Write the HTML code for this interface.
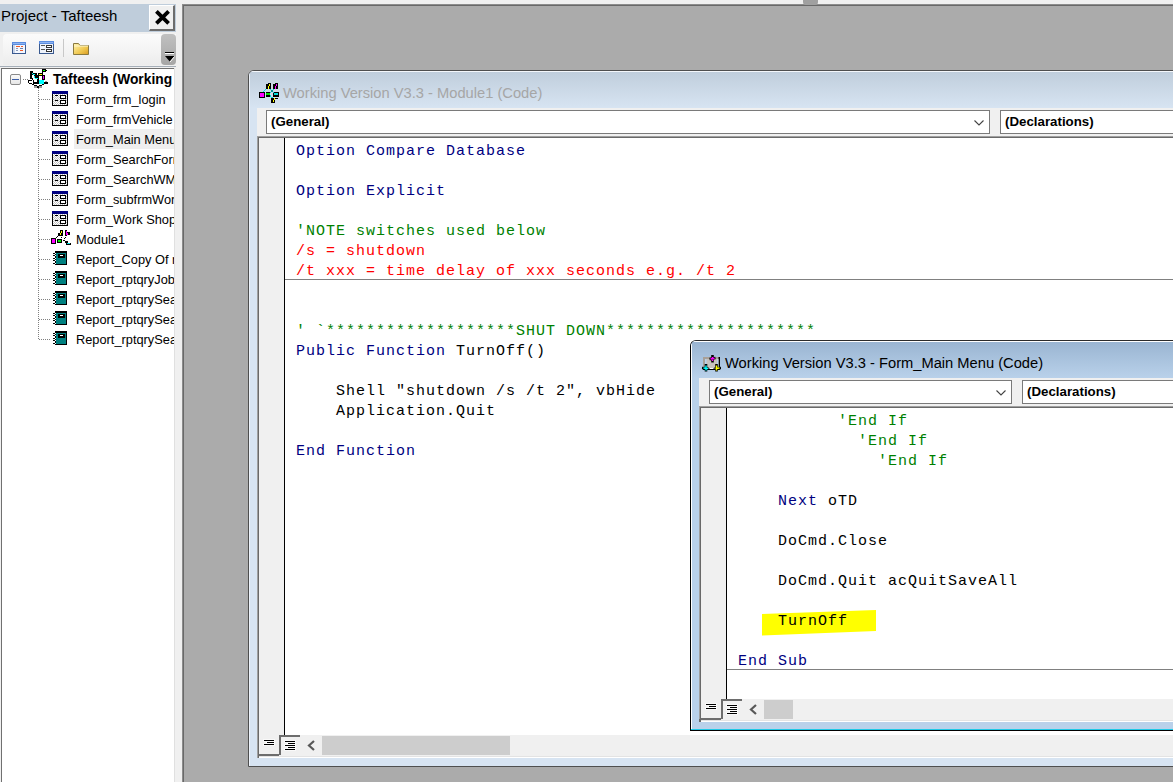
<!DOCTYPE html>
<html><head><meta charset="utf-8">
<style>
*{margin:0;padding:0;box-sizing:border-box}
html,body{width:1173px;height:782px;overflow:hidden;background:#f0f0f0;position:relative;font-family:"Liberation Sans",sans-serif}
div,span,svg,pre{position:absolute}
svg{overflow:visible}
.t{white-space:nowrap}
#ptitle{left:0;top:4px;width:176px;height:28px;background:#bfcddb}
#pclose{left:149px;top:5px;width:26px;height:26px;background:#f0f0f0;border-top:1px solid #fff;border-left:1px solid #fff;border-right:2px solid #6d6d6d;border-bottom:2px solid #6d6d6d}
#ptool{left:3px;top:34px;width:173px;height:31px;border-radius:4px 0 0 0;background:linear-gradient(#fbfbfb,#f3f3f3 60%,#ececec)}
#pchev{left:161px;top:34px;width:15px;height:31px;border-radius:4px;background:linear-gradient(#c0c0c0,#a6a6a6)}
#pline{left:0;top:66px;width:176px;height:1px;background:#a5aeb8}
#tree{left:1px;top:68px;width:173px;height:714px;background:#fff;border-left:1px solid #707070;border-top:1px solid #707070;overflow:hidden}
.ti{font-size:12.8px;white-space:nowrap;color:#000;left:74px}
.hd{height:1px;background:repeating-linear-gradient(90deg,#808080 0 1px,transparent 1px 2px)}
.vd{width:1px;background:repeating-linear-gradient(180deg,#808080 0 1px,transparent 1px 2px)}
#mdi{left:182px;top:4px;width:991px;height:778px;background:#ababab;border-left:2px solid #696969;border-top:2px solid #696969}
.code span{position:static}
.code{font-family:"Liberation Mono",monospace;font-size:15px;letter-spacing:1px;line-height:20px;white-space:pre;color:#000}
.kw{color:#00007f}
.cm{color:#007f00}
.er{color:#ff0000}
.combo{background:#fff;border:1px solid #7a7a7a;font-weight:bold;font-size:13.3px;white-space:nowrap}
.combo span{left:4px;top:3px}
.pane{background:#fff;border-top:2px solid #696969;border-left:2px solid #696969;overflow:hidden}
.margin{left:0;top:0;width:26px;background:#f0f0f0;border-right:1px solid #000}
.sep{height:1px;background:#808080}
.ln{height:1px;background:#000;box-shadow:0 0 0 1px rgba(255,255,255,.6)}
</style></head><body>
<!-- project panel -->
<div id="ptitle"><span class="t" style="left:1px;top:3px;font-size:15px">Project - Tafteesh</span></div>
<div id="pclose"><svg style="left:5px;top:4px" width="16" height="16"><path d="M1.4,1.3 L13.6,13.4 M13.6,1.3 L1.4,13.4" stroke="#000" stroke-width="3.8"/></svg></div>
<div id="ptool">
  <svg style="left:9px;top:8px" width="16" height="14"><g shape-rendering="crispEdges"><rect x="0" y="0" width="14" height="12" fill="#3a5a90"/><rect x="0" y="0" width="14" height="3" fill="#5b8de0"/><rect x="1" y="1" width="12" height="1" fill="#8fb4f0"/><rect x="1" y="3" width="2" height="8" fill="#c8d4e8"/><rect x="3" y="3" width="10" height="8" fill="#f4f8ff"/><rect x="4" y="4" width="4" height="1" fill="#f05a28"/><rect x="9" y="4" width="2" height="1" fill="#f05a28"/><rect x="4" y="6" width="2" height="1" fill="#8a9ab8"/><rect x="8" y="6" width="3" height="1" fill="#6a7fa8"/><rect x="4" y="8" width="2" height="1" fill="#8a9ab8"/><rect x="8" y="8" width="3" height="1" fill="#f05a28"/></g>
</svg>
  <svg style="left:36px;top:7px" width="16" height="14"><g shape-rendering="crispEdges"><rect x="0" y="0" width="15" height="13" fill="#3a5a90"/><rect x="0" y="0" width="15" height="3" fill="#5b8de0"/><rect x="1" y="1" width="13" height="1" fill="#8fb4f0"/><rect x="1" y="3" width="13" height="9" fill="#eef3fb"/><rect x="2" y="4" width="4" height="1" fill="#555"/><rect x="2" y="8" width="4" height="1" fill="#555"/><rect x="7" y="4" width="6" height="3" fill="#333"/><rect x="8" y="5" width="4" height="1" fill="#fff"/><rect x="7" y="8" width="6" height="3" fill="#333"/><rect x="8" y="9" width="4" height="1" fill="#fff"/></g>
</svg>
  <div style="left:60px;top:5px;width:1px;height:18px;background:#c8c8c8"></div>
  <svg style="left:70px;top:8px" width="16" height="13"><g><path d="M0.5,1.5 L0.5,12.5 L15.5,12.5 L15.5,3.5 L7,3.5 L5.5,1.5 Z" fill="url(#fg)" stroke="#8a7a40" stroke-width="1"/><defs><linearGradient id="fg" x1="0" y1="0" x2="1" y2="1"><stop offset="0" stop-color="#fff4b0"/><stop offset="0.6" stop-color="#f0c850"/><stop offset="1" stop-color="#d89a20"/></linearGradient></defs><path d="M1,4 L15,4" stroke="#fff8d0" stroke-width="1"/></g>
</svg>
</div>
<div id="pchev"><div style="left:4px;top:18px;width:9px;height:1px;background:#000;box-shadow:0 1px 0 #fff"></div><svg style="left:4px;top:22px" width="10" height="7"><polygon points="0,0 9.5,0 4.75,5.5" fill="#000"/><path d="M9.5,0.5 L5,6" stroke="#fff" stroke-width="1"/></svg></div>
<div id="pline"></div>
<div style="left:174px;top:68px;width:1px;height:714px;background:#e0e0e0"></div>
<div id="tree">
  <div style="left:8px;top:5px;width:11px;height:11px;border:1px solid #8a8a8a;border-radius:2px;background:linear-gradient(#fbfbfb,#e6e6e6)"><div style="left:1px;top:4px;width:7px;height:1px;background:#3d5fa8"></div></div>
  <div class="hd" style="left:21px;top:10px;width:6px"></div>
  <div class="vd" style="left:36px;top:19px;height:252px"></div>
  <svg style="left:24px;top:-2px" width="22" height="22"><g shape-rendering="crispEdges"><rect x="4" y="4" width="3" height="2" fill="#000"/><rect x="4" y="6" width="2" height="6" fill="#000"/><rect x="6" y="6" width="1" height="1" fill="#0ff"/><rect x="6" y="7" width="1" height="1" fill="#000"/><rect x="6" y="8" width="1" height="3" fill="#fff"/><rect x="6" y="11" width="1" height="1" fill="#000"/><rect x="7" y="6" width="4" height="2" fill="#000"/><rect x="7" y="7" width="2" height="1" fill="#0ff"/><rect x="9" y="8" width="4" height="4" fill="#000"/><rect x="8" y="9" width="1" height="2" fill="#0ff"/><rect x="8" y="8" width="1" height="1" fill="#000"/><rect x="9" y="11" width="3" height="1" fill="#0ff"/><rect x="6" y="12" width="1" height="1" fill="#000"/><rect x="7" y="13" width="1" height="3" fill="#000"/><rect x="8" y="12" width="3" height="3" fill="#fff"/><rect x="7" y="15" width="5" height="2" fill="#000"/><rect x="11" y="12" width="2" height="5" fill="#000"/><rect x="12" y="13" width="1" height="4" fill="#000"/><rect x="13" y="13" width="5" height="4" fill="#0ff"/><rect x="12" y="6" width="5" height="3" fill="#000"/><rect x="13" y="7" width="3" height="1" fill="#ff0"/><rect x="16" y="2" width="4" height="3" fill="#000"/><rect x="17" y="3" width="2" height="1" fill="#0f0"/><rect x="20" y="3" width="1" height="1" fill="#000"/><rect x="16" y="5" width="1" height="1" fill="#000"/><rect x="16" y="8" width="3" height="5" fill="#000"/><rect x="17" y="9" width="1" height="3" fill="#f0f"/><rect x="2" y="13" width="4" height="1" fill="#000"/><rect x="2" y="14" width="1" height="2" fill="#000"/><rect x="3" y="16" width="3" height="1" fill="#000"/><rect x="6" y="17" width="2" height="1" fill="#000"/><rect x="8" y="18" width="3" height="1" fill="#000"/><rect x="8" y="19" width="3" height="2" fill="#9a9a9a"/><rect x="11" y="19" width="2" height="2" fill="#000"/><rect x="13" y="18" width="3" height="1" fill="#000"/><rect x="13" y="19" width="3" height="2" fill="#9a9a9a"/><rect x="16" y="17" width="2" height="1" fill="#000"/><rect x="18" y="15" width="4" height="2" fill="#000"/><rect x="19" y="14" width="2" height="1" fill="#9a9a9a"/></g></svg>
  <span class="ti" style="left:51px;top:3px;font-weight:bold;font-size:13.8px">Tafteesh (Working</span>
  <div class="hd" style="left:37px;top:30px;width:12px"></div>
  <svg style="left:50px;top:22px" width="16" height="15"><defs><pattern id="ck" width="2" height="2" patternUnits="userSpaceOnUse"><rect width="2" height="2" fill="#fff"/><rect x="1" y="0" width="1" height="1" fill="#c4c4c4"/><rect x="0" y="1" width="1" height="1" fill="#c4c4c4"/></pattern></defs><g shape-rendering="crispEdges"><rect x="0" y="0" width="16" height="3" fill="#000080"/><rect x="0" y="3" width="16" height="12" fill="#000"/><rect x="1" y="3" width="14" height="11" fill="url(#ck)"/><rect x="8" y="4" width="6" height="4" fill="#000"/><rect x="9" y="5" width="4" height="2" fill="#fff"/><rect x="8" y="9" width="6" height="4" fill="#000"/><rect x="9" y="10" width="4" height="2" fill="#fff"/><rect x="3" y="4" width="3" height="1" fill="#000"/><rect x="3" y="9" width="3" height="1" fill="#000"/></g>
</svg>
  <span class="ti" style="top:23px">Form_frm_login</span>
  <div class="hd" style="left:37px;top:50px;width:12px"></div>
  <svg style="left:50px;top:42px" width="16" height="15"><defs><pattern id="ck" width="2" height="2" patternUnits="userSpaceOnUse"><rect width="2" height="2" fill="#fff"/><rect x="1" y="0" width="1" height="1" fill="#c4c4c4"/><rect x="0" y="1" width="1" height="1" fill="#c4c4c4"/></pattern></defs><g shape-rendering="crispEdges"><rect x="0" y="0" width="16" height="3" fill="#000080"/><rect x="0" y="3" width="16" height="12" fill="#000"/><rect x="1" y="3" width="14" height="11" fill="url(#ck)"/><rect x="8" y="4" width="6" height="4" fill="#000"/><rect x="9" y="5" width="4" height="2" fill="#fff"/><rect x="8" y="9" width="6" height="4" fill="#000"/><rect x="9" y="10" width="4" height="2" fill="#fff"/><rect x="3" y="4" width="3" height="1" fill="#000"/><rect x="3" y="9" width="3" height="1" fill="#000"/></g>
</svg>
  <span class="ti" style="top:43px">Form_frmVehicle</span>
  <div style="left:72px;top:60px;width:110px;height:20px;background:#efefef"></div>
  <div class="hd" style="left:37px;top:70px;width:12px"></div>
  <svg style="left:50px;top:62px" width="16" height="15"><defs><pattern id="ck" width="2" height="2" patternUnits="userSpaceOnUse"><rect width="2" height="2" fill="#fff"/><rect x="1" y="0" width="1" height="1" fill="#c4c4c4"/><rect x="0" y="1" width="1" height="1" fill="#c4c4c4"/></pattern></defs><g shape-rendering="crispEdges"><rect x="0" y="0" width="16" height="3" fill="#000080"/><rect x="0" y="3" width="16" height="12" fill="#000"/><rect x="1" y="3" width="14" height="11" fill="url(#ck)"/><rect x="8" y="4" width="6" height="4" fill="#000"/><rect x="9" y="5" width="4" height="2" fill="#fff"/><rect x="8" y="9" width="6" height="4" fill="#000"/><rect x="9" y="10" width="4" height="2" fill="#fff"/><rect x="3" y="4" width="3" height="1" fill="#000"/><rect x="3" y="9" width="3" height="1" fill="#000"/></g>
</svg>
  <span class="ti" style="top:63px">Form_Main Menu</span>
  <div class="hd" style="left:37px;top:90px;width:12px"></div>
  <svg style="left:50px;top:82px" width="16" height="15"><defs><pattern id="ck" width="2" height="2" patternUnits="userSpaceOnUse"><rect width="2" height="2" fill="#fff"/><rect x="1" y="0" width="1" height="1" fill="#c4c4c4"/><rect x="0" y="1" width="1" height="1" fill="#c4c4c4"/></pattern></defs><g shape-rendering="crispEdges"><rect x="0" y="0" width="16" height="3" fill="#000080"/><rect x="0" y="3" width="16" height="12" fill="#000"/><rect x="1" y="3" width="14" height="11" fill="url(#ck)"/><rect x="8" y="4" width="6" height="4" fill="#000"/><rect x="9" y="5" width="4" height="2" fill="#fff"/><rect x="8" y="9" width="6" height="4" fill="#000"/><rect x="9" y="10" width="4" height="2" fill="#fff"/><rect x="3" y="4" width="3" height="1" fill="#000"/><rect x="3" y="9" width="3" height="1" fill="#000"/></g>
</svg>
  <span class="ti" style="top:83px">Form_SearchForm</span>
  <div class="hd" style="left:37px;top:110px;width:12px"></div>
  <svg style="left:50px;top:102px" width="16" height="15"><defs><pattern id="ck" width="2" height="2" patternUnits="userSpaceOnUse"><rect width="2" height="2" fill="#fff"/><rect x="1" y="0" width="1" height="1" fill="#c4c4c4"/><rect x="0" y="1" width="1" height="1" fill="#c4c4c4"/></pattern></defs><g shape-rendering="crispEdges"><rect x="0" y="0" width="16" height="3" fill="#000080"/><rect x="0" y="3" width="16" height="12" fill="#000"/><rect x="1" y="3" width="14" height="11" fill="url(#ck)"/><rect x="8" y="4" width="6" height="4" fill="#000"/><rect x="9" y="5" width="4" height="2" fill="#fff"/><rect x="8" y="9" width="6" height="4" fill="#000"/><rect x="9" y="10" width="4" height="2" fill="#fff"/><rect x="3" y="4" width="3" height="1" fill="#000"/><rect x="3" y="9" width="3" height="1" fill="#000"/></g>
</svg>
  <span class="ti" style="top:103px">Form_SearchWM</span>
  <div class="hd" style="left:37px;top:130px;width:12px"></div>
  <svg style="left:50px;top:122px" width="16" height="15"><defs><pattern id="ck" width="2" height="2" patternUnits="userSpaceOnUse"><rect width="2" height="2" fill="#fff"/><rect x="1" y="0" width="1" height="1" fill="#c4c4c4"/><rect x="0" y="1" width="1" height="1" fill="#c4c4c4"/></pattern></defs><g shape-rendering="crispEdges"><rect x="0" y="0" width="16" height="3" fill="#000080"/><rect x="0" y="3" width="16" height="12" fill="#000"/><rect x="1" y="3" width="14" height="11" fill="url(#ck)"/><rect x="8" y="4" width="6" height="4" fill="#000"/><rect x="9" y="5" width="4" height="2" fill="#fff"/><rect x="8" y="9" width="6" height="4" fill="#000"/><rect x="9" y="10" width="4" height="2" fill="#fff"/><rect x="3" y="4" width="3" height="1" fill="#000"/><rect x="3" y="9" width="3" height="1" fill="#000"/></g>
</svg>
  <span class="ti" style="top:123px">Form_subfrmWork</span>
  <div class="hd" style="left:37px;top:150px;width:12px"></div>
  <svg style="left:50px;top:142px" width="16" height="15"><defs><pattern id="ck" width="2" height="2" patternUnits="userSpaceOnUse"><rect width="2" height="2" fill="#fff"/><rect x="1" y="0" width="1" height="1" fill="#c4c4c4"/><rect x="0" y="1" width="1" height="1" fill="#c4c4c4"/></pattern></defs><g shape-rendering="crispEdges"><rect x="0" y="0" width="16" height="3" fill="#000080"/><rect x="0" y="3" width="16" height="12" fill="#000"/><rect x="1" y="3" width="14" height="11" fill="url(#ck)"/><rect x="8" y="4" width="6" height="4" fill="#000"/><rect x="9" y="5" width="4" height="2" fill="#fff"/><rect x="8" y="9" width="6" height="4" fill="#000"/><rect x="9" y="10" width="4" height="2" fill="#fff"/><rect x="3" y="4" width="3" height="1" fill="#000"/><rect x="3" y="9" width="3" height="1" fill="#000"/></g>
</svg>
  <span class="ti" style="top:143px">Form_Work Shop</span>
  <div class="hd" style="left:37px;top:170px;width:12px"></div>
  <svg style="left:48px;top:160px" width="22" height="18"><g shape-rendering="crispEdges"><rect x="10" y="1" width="3" height="6" fill="#000"/><rect x="8" y="4" width="2" height="3" fill="#000"/><rect x="11" y="2" width="1" height="2" fill="#ff0"/><rect x="10" y="4" width="1" height="2" fill="#ff0"/><rect x="15" y="1" width="2" height="6" fill="#000"/><rect x="17" y="3" width="3" height="3" fill="#000"/><rect x="16" y="2" width="1" height="2" fill="#f0f"/><rect x="16" y="4" width="2" height="2" fill="#f0f"/><rect x="7" y="7" width="1" height="1" fill="#000"/><rect x="6" y="8" width="1" height="1" fill="#000"/><rect x="11" y="8" width="1" height="1" fill="#000"/><rect x="15" y="8" width="1" height="1" fill="#000"/><rect x="14" y="9" width="1" height="1" fill="#000"/><rect x="1" y="9" width="5" height="6" fill="#000"/><rect x="2" y="10" width="3" height="4" fill="#f0f"/><rect x="7" y="10" width="5" height="4" fill="#000"/><rect x="8" y="11" width="3" height="2" fill="#0e0"/><rect x="13" y="11" width="2" height="1" fill="#000"/><rect x="15" y="12" width="3" height="2" fill="#000"/><rect x="16" y="14" width="5" height="2" fill="#000"/><rect x="17" y="14" width="3" height="1" fill="#0dd"/></g>
</svg>
  <span class="ti" style="top:163px">Module1</span>
  <div class="hd" style="left:37px;top:190px;width:12px"></div>
  <svg style="left:50px;top:182px" width="16" height="15"><g shape-rendering="crispEdges"><rect x="3" y="0" width="12" height="14" fill="#000"/><rect x="4" y="2" width="10" height="11" fill="#008080"/><rect x="6" y="3" width="7" height="4" fill="#000"/><rect x="8" y="4" width="3" height="1" fill="#fff"/><rect x="1" y="2" width="2" height="1" fill="#000"/><rect x="3" y="2" width="1" height="1" fill="#fff"/><rect x="1" y="4" width="2" height="1" fill="#000"/><rect x="3" y="4" width="1" height="1" fill="#fff"/><rect x="1" y="7" width="2" height="1" fill="#000"/><rect x="3" y="7" width="1" height="1" fill="#fff"/><rect x="1" y="9" width="2" height="1" fill="#000"/><rect x="3" y="9" width="1" height="1" fill="#fff"/><rect x="1" y="12" width="2" height="1" fill="#000"/><rect x="3" y="12" width="1" height="1" fill="#fff"/></g>
</svg>
  <span class="ti" style="top:183px">Report_Copy Of r</span>
  <div class="hd" style="left:37px;top:210px;width:12px"></div>
  <svg style="left:50px;top:202px" width="16" height="15"><g shape-rendering="crispEdges"><rect x="3" y="0" width="12" height="14" fill="#000"/><rect x="4" y="2" width="10" height="11" fill="#008080"/><rect x="6" y="3" width="7" height="4" fill="#000"/><rect x="8" y="4" width="3" height="1" fill="#fff"/><rect x="1" y="2" width="2" height="1" fill="#000"/><rect x="3" y="2" width="1" height="1" fill="#fff"/><rect x="1" y="4" width="2" height="1" fill="#000"/><rect x="3" y="4" width="1" height="1" fill="#fff"/><rect x="1" y="7" width="2" height="1" fill="#000"/><rect x="3" y="7" width="1" height="1" fill="#fff"/><rect x="1" y="9" width="2" height="1" fill="#000"/><rect x="3" y="9" width="1" height="1" fill="#fff"/><rect x="1" y="12" width="2" height="1" fill="#000"/><rect x="3" y="12" width="1" height="1" fill="#fff"/></g>
</svg>
  <span class="ti" style="top:203px">Report_rptqryJob</span>
  <div class="hd" style="left:37px;top:230px;width:12px"></div>
  <svg style="left:50px;top:222px" width="16" height="15"><g shape-rendering="crispEdges"><rect x="3" y="0" width="12" height="14" fill="#000"/><rect x="4" y="2" width="10" height="11" fill="#008080"/><rect x="6" y="3" width="7" height="4" fill="#000"/><rect x="8" y="4" width="3" height="1" fill="#fff"/><rect x="1" y="2" width="2" height="1" fill="#000"/><rect x="3" y="2" width="1" height="1" fill="#fff"/><rect x="1" y="4" width="2" height="1" fill="#000"/><rect x="3" y="4" width="1" height="1" fill="#fff"/><rect x="1" y="7" width="2" height="1" fill="#000"/><rect x="3" y="7" width="1" height="1" fill="#fff"/><rect x="1" y="9" width="2" height="1" fill="#000"/><rect x="3" y="9" width="1" height="1" fill="#fff"/><rect x="1" y="12" width="2" height="1" fill="#000"/><rect x="3" y="12" width="1" height="1" fill="#fff"/></g>
</svg>
  <span class="ti" style="top:223px">Report_rptqrySea</span>
  <div class="hd" style="left:37px;top:250px;width:12px"></div>
  <svg style="left:50px;top:242px" width="16" height="15"><g shape-rendering="crispEdges"><rect x="3" y="0" width="12" height="14" fill="#000"/><rect x="4" y="2" width="10" height="11" fill="#008080"/><rect x="6" y="3" width="7" height="4" fill="#000"/><rect x="8" y="4" width="3" height="1" fill="#fff"/><rect x="1" y="2" width="2" height="1" fill="#000"/><rect x="3" y="2" width="1" height="1" fill="#fff"/><rect x="1" y="4" width="2" height="1" fill="#000"/><rect x="3" y="4" width="1" height="1" fill="#fff"/><rect x="1" y="7" width="2" height="1" fill="#000"/><rect x="3" y="7" width="1" height="1" fill="#fff"/><rect x="1" y="9" width="2" height="1" fill="#000"/><rect x="3" y="9" width="1" height="1" fill="#fff"/><rect x="1" y="12" width="2" height="1" fill="#000"/><rect x="3" y="12" width="1" height="1" fill="#fff"/></g>
</svg>
  <span class="ti" style="top:243px">Report_rptqrySea</span>
  <div class="hd" style="left:37px;top:270px;width:12px"></div>
  <svg style="left:50px;top:262px" width="16" height="15"><g shape-rendering="crispEdges"><rect x="3" y="0" width="12" height="14" fill="#000"/><rect x="4" y="2" width="10" height="11" fill="#008080"/><rect x="6" y="3" width="7" height="4" fill="#000"/><rect x="8" y="4" width="3" height="1" fill="#fff"/><rect x="1" y="2" width="2" height="1" fill="#000"/><rect x="3" y="2" width="1" height="1" fill="#fff"/><rect x="1" y="4" width="2" height="1" fill="#000"/><rect x="3" y="4" width="1" height="1" fill="#fff"/><rect x="1" y="7" width="2" height="1" fill="#000"/><rect x="3" y="7" width="1" height="1" fill="#fff"/><rect x="1" y="9" width="2" height="1" fill="#000"/><rect x="3" y="9" width="1" height="1" fill="#fff"/><rect x="1" y="12" width="2" height="1" fill="#000"/><rect x="3" y="12" width="1" height="1" fill="#fff"/></g>
</svg>
  <span class="ti" style="top:263px">Report_rptqrySea</span>
</div>

<!-- MDI -->
<div id="mdi"></div>
<div style="left:182px;top:4px;width:991px;height:1px;background:#8c8c8c"></div>
<div style="left:182px;top:4px;width:1px;height:778px;background:#8c8c8c"></div>
<div style="left:803px;top:0;width:15px;height:5px;background:#a0a0a0;border-radius:0 0 3px 3px"></div>

<!-- window 1 -->
<div id="w1" style="left:248px;top:70px;width:1000px;height:697px;border:1px solid #4f4f4f;border-radius:6px 6px 0 0;background:#d7e4f2;overflow:hidden">
  <div style="left:0;top:0;width:1000px;height:37px;background:linear-gradient(#bfcddb,#d7e4f2)"></div>
  <div style="left:0;top:0;width:1000px;height:1px;background:#f4f7fb"></div>
  <div style="left:0;top:0;width:1px;height:700px;background:#eef4fc"></div>
  <svg style="left:7px;top:10px" width="26" height="24"><g shape-rendering="crispEdges"><rect x="10" y="3" width="5" height="5" fill="#000"/><rect x="12" y="2" width="3" height="1" fill="#000"/><rect x="13" y="3" width="1" height="2" fill="#ff0"/><rect x="12" y="5" width="1" height="3" fill="#ff0"/><rect x="17" y="3" width="5" height="5" fill="#000"/><rect x="19" y="2" width="3" height="1" fill="#000"/><rect x="20" y="3" width="1" height="2" fill="#f0f"/><rect x="19" y="5" width="1" height="3" fill="#f0f"/><rect x="3" y="11" width="6" height="6" fill="#000"/><rect x="4" y="12" width="4" height="4" fill="#f0f"/><rect x="10" y="11" width="4" height="5" fill="#000"/><rect x="10" y="12" width="4" height="2" fill="#0d0"/><rect x="17" y="11" width="6" height="5" fill="#000"/><rect x="18" y="12" width="4" height="2" fill="#0dd"/><rect x="7" y="10" width="1" height="1" fill="#0dd"/><rect x="8" y="9" width="1" height="1" fill="#0dd"/><rect x="9" y="8" width="1" height="1" fill="#0dd"/><rect x="14" y="8" width="1" height="1" fill="#0dd"/><rect x="17" y="8" width="1" height="1" fill="#0dd"/><rect x="15" y="9" width="2" height="2" fill="#099"/><rect x="14" y="11" width="1" height="1" fill="#0dd"/><rect x="17" y="11" width="1" height="1" fill="#0dd"/><rect x="14" y="14" width="1" height="2" fill="#0dd"/><rect x="15" y="16" width="2" height="1" fill="#0dd"/><rect x="15" y="17" width="7" height="1" fill="#000"/><rect x="15" y="17" width="4" height="5" fill="#000"/><rect x="18" y="17" width="1" height="2" fill="#ff0"/><rect x="17" y="19" width="1" height="2" fill="#ff0"/></g>
</svg>
  <span class="t" style="left:34px;top:14px;font-size:14.7px;color:#a6a6a6">Working Version V3.3 - Module1 (Code)</span>
  <div style="left:8px;top:37px;width:1000px;height:29px;background:#f0f0f0"></div>
  <div class="combo" style="left:17px;top:39px;width:724px;height:24px"><span>(General)</span>
    <svg style="left:707px;top:9px" width="11" height="6"><polyline points="0.5,0.5 5,5 9.5,0.5" fill="none" stroke="#444" stroke-width="1.1"/></svg></div>
  <div class="combo" style="left:751px;top:39px;width:300px;height:24px"><span>(Declarations)</span></div>
  <div class="pane" style="left:8px;top:65px;width:1000px;height:622px">
    <div class="margin" style="height:597px"></div>
    <div class="sep" style="left:26px;top:141px;width:1000px"></div>
<pre class="code" style="left:37px;top:4px"><span class="kw">Option Compare Database</span>

<span class="kw">Option Explicit</span>

<span class="cm">'NOTE switches used below</span>
<span class="er">/s = shutdown</span>
<span class="er">/t xxx = time delay of xxx seconds e.g. /t 2</span>


<span class="cm">' `*******************SHUT DOWN*********************</span>
<span class="kw">Public Function</span> TurnOff()

    Shell "shutdown /s /t 2", vbHide
    Application.Quit

<span class="kw">End Function</span></pre>
    
    <div style="left:0;top:597px;width:2000px;height:21px;background:#f0f0f0"></div>
    <div style="left:0;top:618px;width:2000px;height:1px;background:#e3e3e3"></div>
    <div style="left:-2px;top:619px;width:2000px;height:1px;background:#fff"></div>
    <div style="left:0;top:597px;width:20px;height:21px;background:#f0f0f0;border-bottom:2px solid #6d6d6d"></div>
    <div style="left:20px;top:597px;width:21px;height:20px;background:#f0f0f0;border-top:2px solid #6d6d6d;border-left:2px solid #6d6d6d"></div>
    <div class="ln" style="left:5px;top:602px;width:10px"></div>
    <div class="ln" style="left:8px;top:604px;width:7px"></div>
    <div class="ln" style="left:5px;top:606px;width:10px"></div>
    <div class="ln" style="left:26px;top:603px;width:10px"></div>
    <div class="ln" style="left:29px;top:605px;width:7px"></div>
    <div class="ln" style="left:26px;top:607px;width:10px"></div>
    <div class="ln" style="left:29px;top:609px;width:7px"></div>
    <div class="ln" style="left:26px;top:611px;width:10px"></div>
    <svg style="left:47px;top:602px" width="10" height="11"><polyline points="8,1 3,5.5 8,10" fill="none" stroke="#585858" stroke-width="2.2"/></svg>
    <div style="left:63px;top:598px;width:188px;height:19px;background:#cdcdcd"></div>

  </div>
  <div style="left:8px;top:65px;width:2000px;height:1px;background:#a0a0a0"></div>
  <div style="left:8px;top:65px;width:1px;height:622px;background:#a0a0a0"></div>
</div>

<!-- window 2 -->
<div id="w2" style="left:690px;top:340px;width:600px;height:391px;border:1px solid #000;border-top-color:#2b2b2b;border-radius:6px 6px 0 0;background:#b9d1ea;overflow:hidden">
  <div style="left:0;top:0;width:600px;height:37px;background:linear-gradient(#99b4d1,#b9d1ea)"></div>
  <div style="left:0;top:0;width:600px;height:1px;background:#fff"></div>
  <div style="left:0;top:0;width:1px;height:400px;background:#fff"></div>
  <svg style="left:8px;top:10px" width="26" height="24"><g><rect x="4" y="6" width="17" height="13" fill="#000"/><rect x="4" y="6" width="15.5" height="11.5" fill="#a8a098"/><rect x="6" y="8" width="13.5" height="9.5" fill="#b9d1ea"/><rect x="7.5" y="8" width="10.5" height="9" fill="#c6c2be"/><rect x="11" y="17" width="3" height="1" fill="#fff"/><path d="M13.5,4 L13.5,11.5 M10.5,8 L16.5,7" stroke="#000" stroke-width="2.6"/><path d="M13.5,6 L13.5,10 M11.5,8 L15.5,7.3" stroke="#f0f" stroke-width="1.4"/><path d="M7,13 L7,20.5 M3,17 L9.5,17.5" stroke="#000" stroke-width="2.6"/><path d="M7,14.5 L7,19.5 M4.5,17 L9,17.5" stroke="#0ff" stroke-width="1.4"/><path d="M17.5,13 L17.5,20.5 M15.5,17.5 L22,17" stroke="#000" stroke-width="2.6"/><path d="M17.5,14.5 L17.5,19.5 M16.5,17.5 L20.5,17" stroke="#ff0" stroke-width="1.4"/></g>
</svg>
  <span class="t" style="left:34px;top:14px;font-size:14.7px;color:#000">Working Version V3.3 - Form_Main Menu (Code)</span>
  <div style="left:8px;top:37px;width:600px;height:29px;background:#f0f0f0"></div>
  <div class="combo" style="left:18px;top:39px;width:303px;height:24px"><span>(General)</span>
    <svg style="left:286px;top:9px" width="11" height="6"><polyline points="0.5,0.5 5,5 9.5,0.5" fill="none" stroke="#444" stroke-width="1.1"/></svg></div>
  <div class="combo" style="left:331px;top:39px;width:300px;height:24px"><span>(Declarations)</span></div>
  <div style="left:0;top:388px;width:600px;height:1px;background:#1ec8e6"></div>
  <div class="pane" style="left:8px;top:65px;width:600px;height:316px">
    <div class="margin" style="height:291px"></div>
    <div class="sep" style="left:26px;top:261px;width:1000px"></div>
    <svg style="left:61px;top:202px" width="115" height="27"><polygon points="0,4 114,0 114,21 0,25.6" fill="#ffff00"/></svg>
<pre class="code" style="left:37px;top:4px">          <span class="cm">'End If</span>
            <span class="cm">'End If</span>
              <span class="cm">'End If</span>

    <span class="kw">Next</span> oTD

    DoCmd.Close

    DoCmd.Quit acQuitSaveAll

    TurnOff

<span class="kw">End Sub</span></pre>
    
    <div style="left:0;top:291px;width:2000px;height:21px;background:#f0f0f0"></div>
    <div style="left:0;top:312px;width:2000px;height:1px;background:#e3e3e3"></div>
    <div style="left:-2px;top:313px;width:2000px;height:1px;background:#fff"></div>
    <div style="left:0;top:291px;width:20px;height:21px;background:#f0f0f0;border-bottom:2px solid #6d6d6d"></div>
    <div style="left:20px;top:291px;width:21px;height:20px;background:#f0f0f0;border-top:2px solid #6d6d6d;border-left:2px solid #6d6d6d"></div>
    <div class="ln" style="left:5px;top:296px;width:10px"></div>
    <div class="ln" style="left:8px;top:298px;width:7px"></div>
    <div class="ln" style="left:5px;top:300px;width:10px"></div>
    <div class="ln" style="left:26px;top:297px;width:10px"></div>
    <div class="ln" style="left:29px;top:299px;width:7px"></div>
    <div class="ln" style="left:26px;top:301px;width:10px"></div>
    <div class="ln" style="left:29px;top:303px;width:7px"></div>
    <div class="ln" style="left:26px;top:305px;width:10px"></div>
    <svg style="left:47px;top:296px" width="10" height="11"><polyline points="8,1 3,5.5 8,10" fill="none" stroke="#585858" stroke-width="2.2"/></svg>
    <div style="left:63px;top:292px;width:29px;height:19px;background:#cdcdcd"></div>

  </div>
  <div style="left:8px;top:65px;width:2000px;height:1px;background:#a0a0a0"></div>
  <div style="left:8px;top:65px;width:1px;height:313px;background:#a0a0a0"></div>
</div>
</body></html>
